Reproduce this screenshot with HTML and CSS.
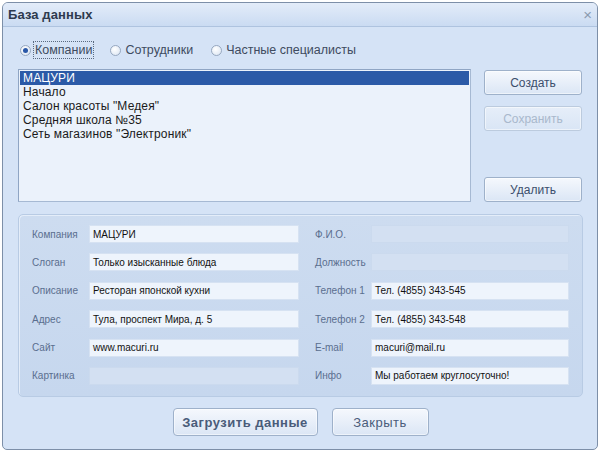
FILE: index.html
```html
<!DOCTYPE html>
<html lang="ru">
<head>
<meta charset="utf-8">
<link rel="stylesheet" href="styles.css">
</head>
<body>
<div class="window">
  <div class="titlebar">
    <span class="title">База данных</span>
    <span class="close">×</span>
  </div>
  <div class="content">
    <div class="radios">
      <label class="radio"><span class="dot on"></span><span class="rtext focus">Компании</span></label>
      <label class="radio"><span class="dot"></span><span class="rtext">Сотрудники</span></label>
      <label class="radio"><span class="dot"></span><span class="rtext">Частные специалисты</span></label>
    </div>
    <div class="top">
      <div class="list">
        <div class="item sel">МАЦУРИ</div>
        <div class="item">Начало</div>
        <div class="item">Салон красоты "Медея"</div>
        <div class="item">Средняя школа №35</div>
        <div class="item">Сеть магазинов "Электроник"</div>
      </div>
      <div class="side">
        <div class="btn">Создать</div>
        <div class="btn disabled">Сохранить</div>
        <div class="spacer"></div>
        <div class="btn">Удалить</div>
      </div>
    </div>
    <div class="panel">
      <div class="lbl">Компания</div><div class="inp">МАЦУРИ</div>
      <div class="lbl">Ф.И.О.</div><div class="inp empty"></div>
      <div class="lbl">Слоган</div><div class="inp">Только изысканные блюда</div>
      <div class="lbl">Должность</div><div class="inp empty"></div>
      <div class="lbl">Описание</div><div class="inp">Ресторан японской кухни</div>
      <div class="lbl">Телефон 1</div><div class="inp">Тел. (4855) 343-545</div>
      <div class="lbl">Адрес</div><div class="inp">Тула, проспект Мира, д. 5</div>
      <div class="lbl">Телефон 2</div><div class="inp">Тел. (4855) 343-548</div>
      <div class="lbl">Сайт</div><div class="inp">www.macuri.ru</div>
      <div class="lbl">E-mail</div><div class="inp">macuri@mail.ru</div>
      <div class="lbl">Картинка</div><div class="inp empty"></div>
      <div class="lbl">Инфо</div><div class="inp">Мы работаем круглосуточно!</div>
    </div>
    <div class="bottom">
      <div class="btn big bold">Загрузить данные</div>
      <div class="btn big close-btn">Закрыть</div>
    </div>
  </div>
</div>
</body>
</html>
```
FILE: styles.css
```css
* { box-sizing: border-box; }
html, body { margin: 0; padding: 0; background: #ffffff; }
body { padding: 2px 0 0 2px; font-family: "Liberation Sans", Arial, sans-serif; }

.window {
  width: 596px;
  height: 448px;
  border: 1px solid #7d8fa8;
  border-radius: 6px 6px 5px 5px;
  background: #d5e3f6;
  overflow: hidden;
  display: flex;
  flex-direction: column;
}

.titlebar {
  height: 24px;
  flex: none;
  display: flex;
  align-items: center;
  justify-content: space-between;
  padding: 0 5px 0 5px;
  background: linear-gradient(#e3ecf9, #cadbf2);
  border-bottom: 1px solid #aec3df;
}
.title { font-weight: bold; font-size: 13px; color: #2e3a4e; letter-spacing: 0.1px; }
.close { color: #8a9ab0; font-size: 15px; line-height: 1; }

.content {
  flex: 1;
  padding: 14px 14px 0 15px;
  display: flex;
  flex-direction: column;
}

.radios { display: flex; align-items: center; height: 18px; padding-left: 2px; gap: 16px; }
.radio { display: flex; align-items: center; gap: 2px; font-size: 12.5px; color: #3e4b60; }
.dot {
  flex: none;
  width: 11px; height: 11px; border-radius: 50%;
  border: 1px solid #97a8c0;
  background: radial-gradient(circle at 40% 35%, #ffffff, #d8e3f1);
  position: relative;
}
.dot.on::after {
  content: ""; position: absolute; left: 2px; top: 2px; width: 5px; height: 5px; border-radius: 50%;
  background: #2a58a8;
}
.rtext { padding: 1px 1px; border: 1px solid transparent; }
.rtext.focus { border: 1px dotted #5a6a80; }

.top { display: flex; gap: 13px; margin-top: 10px; height: 133px; }
.list {
  width: 453px;
  border: 1px solid #a6b9d3;
  border-top-color: #8fa5c4;
  border-left-color: #8fa5c4;
  background: #ebf2fb;
  padding: 1px;
  font-size: 12px;
  letter-spacing: 0.15px;
  color: #1a1a1a;
}
.item { height: 14px; line-height: 14px; padding-left: 3px; }
.item.sel { background: #2b5aa7; color: #ffffff; }

.side { width: 98px; display: flex; flex-direction: column; padding-top: 1px; gap: 11px; }
.spacer { flex: 1; }
.btn {
  height: 25px;
  display: flex; align-items: center; justify-content: center;
  border: 1px solid #9eb1ca;
  border-radius: 3px;
  background: linear-gradient(#f5f8fd, #dbe6f5);
  box-shadow: inset 0 0 0 1px #ffffff80;
  font-size: 12px;
  color: #3c4e6c;
}
.btn.disabled { color: #a9b8cc; border-color: #bccbde; background: linear-gradient(#e6eef9, #d9e5f5); }

.panel {
  margin-top: 12px;
  height: 183px;
  border: 1px solid #b8cbe4;
  border-radius: 5px;
  background: linear-gradient(#cddcf0, #c6d7ee);
  box-shadow: inset 1px 1px 0 #e4edf9;
  padding: 10px 12px 0 13px;
  display: grid;
  grid-template-columns: 57px 226px 56px 198px;
  grid-auto-rows: 18px;
  row-gap: 10.4px;
}
.panel .inp:nth-child(4n+2) { margin-right: 16px; }
.lbl { font-size: 10px; color: #5a6e8e; display: flex; align-items: center; }
.inp {
  background: #eef4fc;
  border: 1px solid #d6e2f2;
  font-size: 10px;
  color: #111;
  display: flex; align-items: center;
  padding-left: 3px;
}
.inp.empty { background: #d3e0f2; border-color: #cbdaee; }

.bottom { display: flex; justify-content: center; gap: 14px; margin-top: 11px; }
.btn.big { height: 28px; font-size: 13px; border-radius: 4px; color: #4a5c7a; letter-spacing: 0.5px; }
.btn.bold { width: 145px; font-weight: bold; }
.close-btn { width: 97px; }
```
